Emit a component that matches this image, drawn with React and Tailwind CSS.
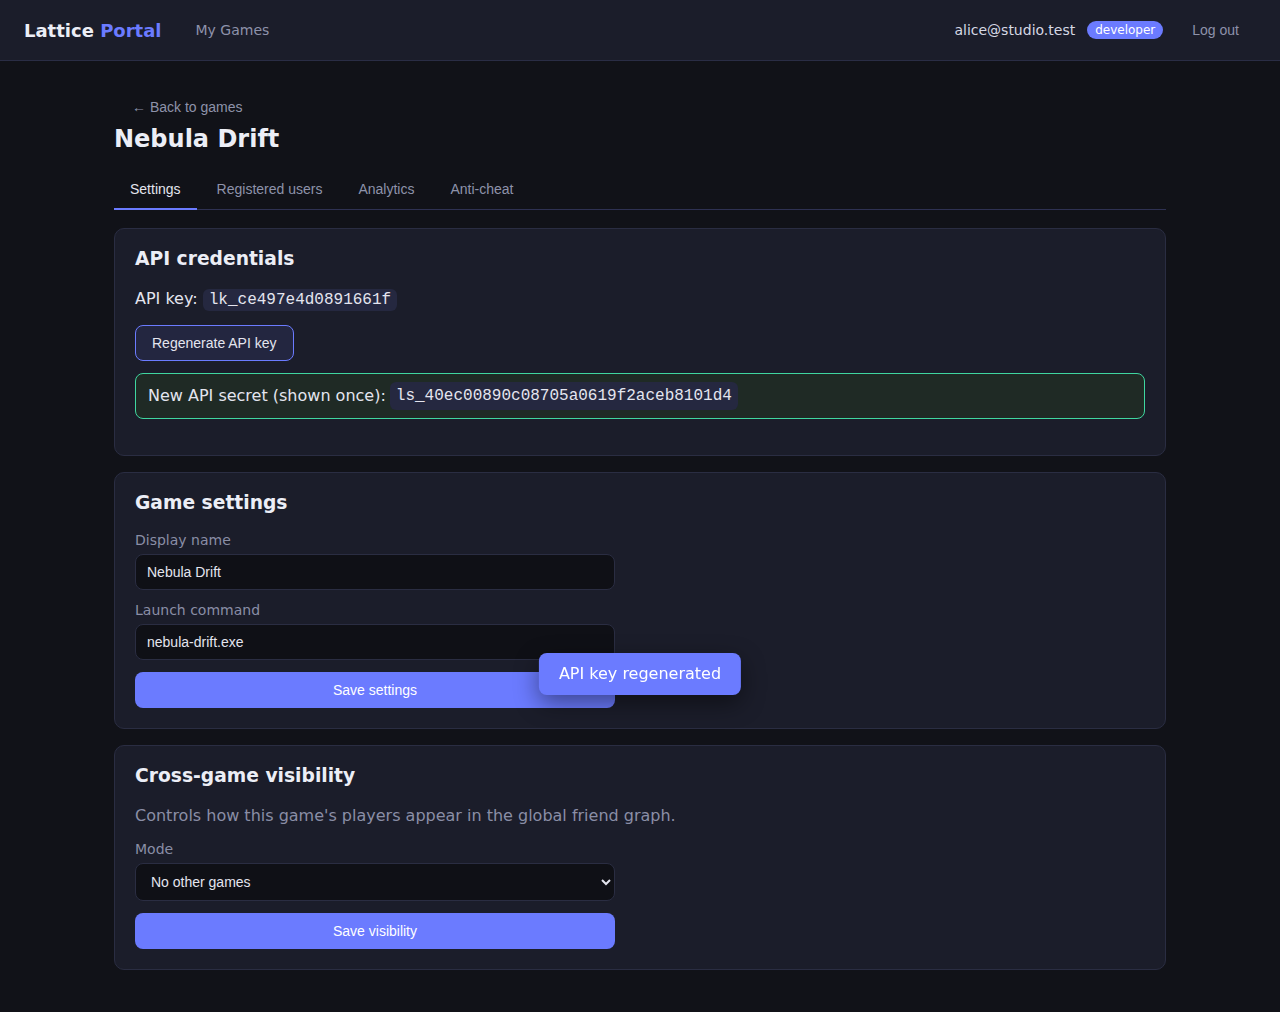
import React, { useState } from 'react';

const TABS = ['Settings', 'Registered users', 'Analytics', 'Anti-cheat'];

export default function App() {
  const [tab, setTab] = useState('Settings');
  const [name, setName] = useState('Nebula Drift');
  const [launch, setLaunch] = useState('nebula-drift.exe');
  const [mode, setMode] = useState('none');

  return (
    <div className="min-h-[1012px] bg-[#111218] text-[#e4e5ef] font-['DejaVu_Sans',sans-serif]">
      {/* Top bar */}
      <header className="h-[61px] bg-[#1b1d2a] border-b border-[#2a2d45] flex items-center px-6">
        <div className="text-[18px] font-bold text-[#eceef6]">
          Lattice <span className="text-[#6b7bff]">Portal</span>
        </div>
        <a className="ml-[34px] text-[14px] text-[#8e92aa] cursor-pointer">My Games</a>
        <div className="ml-auto flex items-center">
          <span className="text-[14px] text-[#d6d8e4]">alice@studio.test</span>
          <span className="ml-3 bg-[#6b7bff] text-white text-[12px] rounded-full px-2 leading-[18px]">developer</span>
          <button className="ml-[17px] mr-[5px] px-[12px] py-1 text-[14px] text-[#8e92aa] font-['Liberation_Sans',sans-serif]">Log out</button>
        </div>
      </header>

      <main className="max-w-[1100px] mx-auto px-6 pt-[34px] pb-10">
        <button className="pl-[18px] text-[14px] leading-[16px] text-[#8e92aa] font-['Liberation_Sans',sans-serif]">
          ← Back to games
        </button>
        <h1 className="mt-[5px] text-[24px] leading-[30px] font-bold text-[#eceef6]">Nebula Drift</h1>

        {/* Tabs */}
        <div className="mt-[17px] flex gap-1 border-b border-[#2e3152]">
          {TABS.map(t => (
            <button
              key={t}
              onClick={() => setTab(t)}
              className={
                'px-4 pt-[10px] pb-[11px] text-[14px] leading-[16px] font-[\'Liberation_Sans\',sans-serif] border-b-2 -mb-px ' +
                (tab === t ? 'text-[#e4e5ef] border-[#6b7bff]' : 'text-[#8e92aa] border-transparent')
              }
            >
              {t}
            </button>
          ))}
        </div>

        {/* API credentials */}
        <section className="mt-[18px] bg-[#1b1d2a] border border-[#2a2d42] rounded-[10px] px-5 pt-5 pb-[36px]">
          <h2 className="text-[18.7px] leading-[20px] font-bold text-[#eceef6]">API credentials</h2>
          <p className="mt-[18px] text-[16px] leading-[24px]">
            API key:{' '}
            <code className="bg-[#252840] rounded-[6px] px-[6px] py-[2px] font-['Liberation_Mono',monospace] text-[16px]">lk_ce497e4d0891661f</code>
          </p>
          <button className="mt-[13px] h-[36px] px-4 rounded-[8px] border border-[#6b7bff] bg-[#232640] text-[14px] text-[#e4e5ef] font-['Liberation_Sans',sans-serif]">
            Regenerate API key
          </button>
          <div className="mt-3 h-[46px] flex items-center px-3 rounded-[8px] border border-[#3fd6a0] bg-[#1f2a25] text-[16px] text-[#e4e5ef]">
            New API secret (shown once):
            <code className="ml-1 bg-[#252840] rounded-[6px] px-[6px] py-[2px] font-['Liberation_Mono',monospace] text-[16px]">ls_40ec00890c08705a0619f2aceb8101d4</code>
          </div>
        </section>

        {/* Game settings */}
        <section className="mt-4 bg-[#1b1d2a] border border-[#2a2d42] rounded-[10px] p-5">
          <h2 className="text-[18.7px] leading-[20px] font-bold text-[#eceef6]">Game settings</h2>
          <label className="block mt-[17px] text-[14px] leading-[20px] text-[#8a8ea6]">Display name</label>
          <input
            value={name}
            onChange={e => setName(e.target.value)}
            className="mt-1 block w-full max-w-[480px] h-[36px] px-[11px] rounded-[8px] bg-[#0f1016] border border-[#2a2d42] text-[14px] text-[#e4e5ef] font-['Liberation_Sans',sans-serif] outline-none"
          />
          <label className="block mt-[10px] text-[14px] leading-[20px] text-[#8a8ea6]">Launch command</label>
          <input
            value={launch}
            onChange={e => setLaunch(e.target.value)}
            className="mt-1 block w-full max-w-[480px] h-[36px] px-[11px] rounded-[8px] bg-[#0f1016] border border-[#2a2d42] text-[14px] text-[#e4e5ef] font-['Liberation_Sans',sans-serif] outline-none"
          />
          <button className="mt-3 block w-full max-w-[480px] h-[36px] rounded-[8px] bg-[#6b7bff] text-[14px] text-white font-['Liberation_Sans',sans-serif]">
            Save settings
          </button>
        </section>

        {/* Cross-game visibility */}
        <section className="mt-4 bg-[#1b1d2a] border border-[#2a2d42] rounded-[10px] p-5">
          <h2 className="text-[18.7px] leading-[20px] font-bold text-[#eceef6]">Cross-game visibility</h2>
          <p className="mt-[18px] text-[16px] leading-[24px] text-[#8a8ea6]">
            Controls how this game's players appear in the global friend graph.
          </p>
          <label className="block mt-[11px] text-[14px] leading-[20px] text-[#8a8ea6]">Mode</label>
          <select
            value={mode}
            onChange={e => setMode(e.target.value)}
            className="mt-1 block w-full max-w-[480px] h-[38px] px-[11px] rounded-[8px] bg-[#0f1016] border border-[#2a2d42] text-[14px] text-[#e4e5ef] font-['Liberation_Sans',sans-serif] outline-none"
          >
            <option value="none">No other games</option>
            <option value="studio">Same studio only</option>
            <option value="all">All games</option>
          </select>
          <button className="mt-3 block w-full max-w-[480px] h-[36px] rounded-[8px] bg-[#6b7bff] text-[14px] text-white font-['Liberation_Sans',sans-serif]">
            Save visibility
          </button>
        </section>
      </main>

      {/* Toast */}
      <div className="fixed left-1/2 -translate-x-1/2 top-[653px] h-[42px] px-5 flex items-center rounded-[8px] bg-[#6b7bff] text-white text-[16px] shadow-[0_8px_24px_rgba(0,0,0,0.45)]">
        API key regenerated
      </div>
    </div>
  );
}
